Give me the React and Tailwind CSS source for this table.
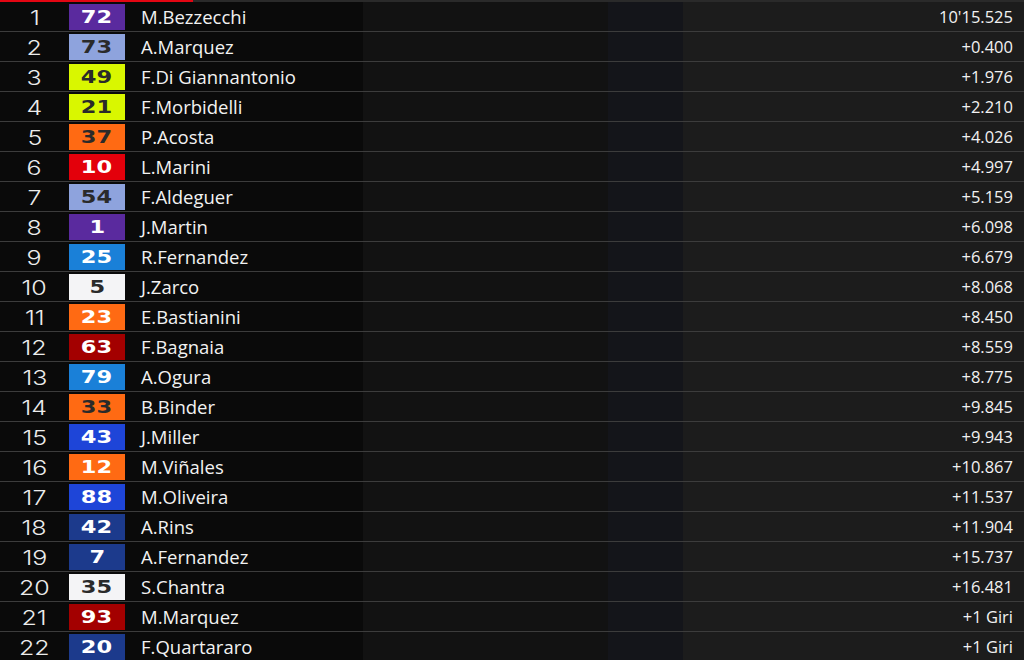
import React from "react";

const rows = [
  [1, "72", "M.Bezzecchi", "10'15.525", "bg-[#5a2a9e]", "text-white"],
  [2, "73", "A.Marquez", "+0.400", "bg-[#8ea3dd]", "text-[#2a2a2a]"],
  [3, "49", "F.Di Giannantonio", "+1.976", "bg-[#d9f700]", "text-[#2a2a2a]"],
  [4, "21", "F.Morbidelli", "+2.210", "bg-[#d9f700]", "text-[#2a2a2a]"],
  [5, "37", "P.Acosta", "+4.026", "bg-[#ff6a13]", "text-[#2a2a2a]"],
  [6, "10", "L.Marini", "+4.997", "bg-[#e3000b]", "text-white"],
  [7, "54", "F.Aldeguer", "+5.159", "bg-[#8ea3dd]", "text-[#2a2a2a]"],
  [8, "1", "J.Martin", "+6.098", "bg-[#5a2a9e]", "text-white"],
  [9, "25", "R.Fernandez", "+6.679", "bg-[#1a80d8]", "text-white"],
  [10, "5", "J.Zarco", "+8.068", "bg-[#f4f4f6]", "text-[#2a2a2a]"],
  [11, "23", "E.Bastianini", "+8.450", "bg-[#ff6a13]", "text-white"],
  [12, "63", "F.Bagnaia", "+8.559", "bg-[#a30000]", "text-white"],
  [13, "79", "A.Ogura", "+8.775", "bg-[#1a80d8]", "text-white"],
  [14, "33", "B.Binder", "+9.845", "bg-[#ff6a13]", "text-[#2a2a2a]"],
  [15, "43", "J.Miller", "+9.943", "bg-[#1e45d8]", "text-white"],
  [16, "12", "M.Viñales", "+10.867", "bg-[#ff6a13]", "text-white"],
  [17, "88", "M.Oliveira", "+11.537", "bg-[#1e45d8]", "text-white"],
  [18, "42", "A.Rins", "+11.904", "bg-[#1c3a8c]", "text-white"],
  [19, "7", "A.Fernandez", "+15.737", "bg-[#1c3a8c]", "text-white"],
  [20, "35", "S.Chantra", "+16.481", "bg-[#f4f4f6]", "text-[#2a2a2a]"],
  [21, "93", "M.Marquez", "+1 Giri", "bg-[#a30000]", "text-white"],
  [22, "20", "F.Quartararo", "+1 Giri", "bg-[#1c3a8c]", "text-white"],
];

export default function App() {
  return (
    <div className="w-[1024px] h-[660px] overflow-hidden bg-[linear-gradient(to_right,#0a0a0a_0px,#0a0a0a_363px,#121212_363px,#121212_608px,#14151a_608px,#14151a_683px,#1c1c1c_683px)]">
      <div className="flex h-[2px]">
        <div className="w-[193px] bg-[#e30613]" />
        <div className="flex-1 bg-[#2a2a2a]" />
      </div>
      {rows.map(([pos, num, name, time, bg, fg]) => (
        <div key={pos} className="flex items-center h-[30px] border-b border-[#3c3c3c]">
          <div className="w-[69px] pt-[2px] flex justify-center text-[20px] font-light text-[#ececec] font-['Inter',sans-serif] leading-none">
            <span className="inline-block scale-x-125">{pos}</span>
          </div>
          <div className={`w-[56px] h-[26px] flex items-center justify-center ${bg} ${fg} font-['DejaVu_Sans',sans-serif] leading-none`}>
            <span className="text-[18px] font-black scale-x-125 inline-block">{num}</span>
          </div>
          <div className="ml-[16px] pt-[2px] flex-1 text-[18.5px] text-[#f2f2f2] font-['Open_Sans',sans-serif] leading-none">
            {name}
          </div>
          <div className="pr-[11px] pt-[2px] text-[16.5px] text-[#f2f2f2] font-['Open_Sans',sans-serif] leading-none">
            {time}
          </div>
        </div>
      ))}
    </div>
  );
}
